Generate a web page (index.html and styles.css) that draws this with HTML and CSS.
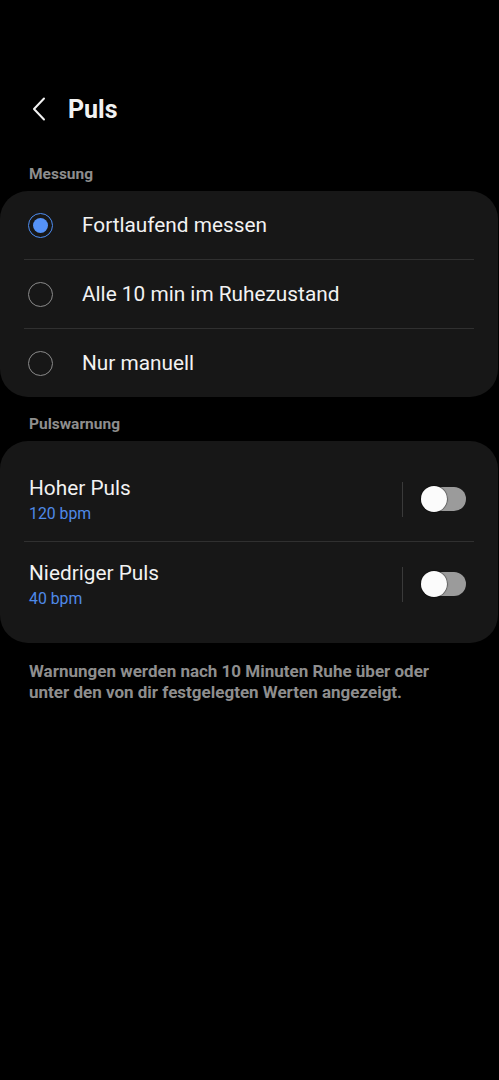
FILE: index.html
```html
<!DOCTYPE html>
<html lang="de">
<head>
  <meta charset="UTF-8" />
  <meta name="viewport" content="width=device-width, initial-scale=1.0"/>
  <title>Puls</title>
  <link rel="stylesheet" href="styles.css">
</head>
<body>
  <header class="topbar">
    <svg class="back" width="14" height="24" viewBox="0 0 14 24"><path d="M12 1.5 L2 12 L12 22.5" fill="none" stroke="#f2f2f2" stroke-width="2" stroke-linecap="round" stroke-linejoin="round"/></svg>
    <h1>Puls</h1>
  </header>

  <div class="section-label">Messung</div>
  <div class="card">
    <div class="radio-row">
      <span class="radio checked"></span>
      <span class="row-text">Fortlaufend messen</span>
    </div>
    <div class="radio-row">
      <span class="radio"></span>
      <span class="row-text">Alle 10 min im Ruhezustand</span>
    </div>
    <div class="radio-row">
      <span class="radio"></span>
      <span class="row-text">Nur manuell</span>
    </div>
  </div>

  <div class="section-label">Pulswarnung</div>
  <div class="card switches">
    <div class="switch-row">
      <div class="switch-text">
        <div class="row-text">Hoher Puls</div>
        <div class="sub">120 bpm</div>
      </div>
      <span class="vline"></span>
      <span class="toggle"></span>
    </div>
    <div class="switch-row">
      <div class="switch-text">
        <div class="row-text">Niedriger Puls</div>
        <div class="sub">40 bpm</div>
      </div>
      <span class="vline"></span>
      <span class="toggle"></span>
    </div>
  </div>

  <p class="note">Warnungen werden nach 10 Minuten Ruhe über oder unter den von dir festgelegten Werten angezeigt.</p>
</body>
</html>
```

FILE: styles.css
```css
body { margin: 0; background: #000; color: #f2f2f2; font-family: Roboto, "Noto Sans", sans-serif; }
.topbar { display: flex; align-items: center; height: 40px; margin-top: 89px; padding-left: 32px; }
.back { margin-right: 22px; }
h1 { margin: 0; font-size: 25px; font-weight: 700; }
.section-label { padding: 0 29px; margin: 36px 0 8px; font-size: 15.5px; font-weight: 700; color: #8e8e8e; line-height: 18px; }
.card + .section-label { margin-top: 18px; }
.card { background: #171717; border-radius: 28px; margin: 0 1px 0 0; }
.radio-row { display: flex; align-items: center; height: 68px; margin: 0 24px; border-top: 1px solid #303030; }
.radio-row:first-child { border-top: none; }
.radio { box-sizing: border-box; width: 25px; height: 25px; border-radius: 50%; border: 1.5px solid #8a8a8a; margin-left: 4px; margin-right: 29px; display: flex; align-items: center; justify-content: center; }
.radio.checked { border-color: #4d8df2; }
.radio.checked::after { content: ""; width: 15px; height: 15px; border-radius: 50%; background: #5592f7; }
.row-text { font-size: 20.8px; color: #f2f2f2; }
.switches { padding: 16px 0 17px; }
.switch-row { display: flex; align-items: center; height: 84px; margin: 0 24px; border-top: 1px solid #303030; }
.switch-row:first-child { border-top: none; }
.switch-text { flex: 1; padding-left: 5px; }
.sub { font-size: 15.8px; color: #4f8ae8; margin-top: 4px; }
.vline { width: 1px; height: 35px; background: #3a3a3a; margin-right: 18px; }
.toggle { position: relative; width: 45px; height: 24px; border-radius: 12px; background: #9b9b9b; margin-right: 8px; }
.toggle::before { content: ""; position: absolute; left: 0; top: -1px; width: 26px; height: 26px; border-radius: 50%; background: #fbfbfb; box-shadow: 0 0 1px 0.5px rgba(0,0,0,0.7); }
.note { margin: 18px 29px; font-size: 17px; line-height: 21px; font-weight: 700; color: #8e8e8e; }
```
